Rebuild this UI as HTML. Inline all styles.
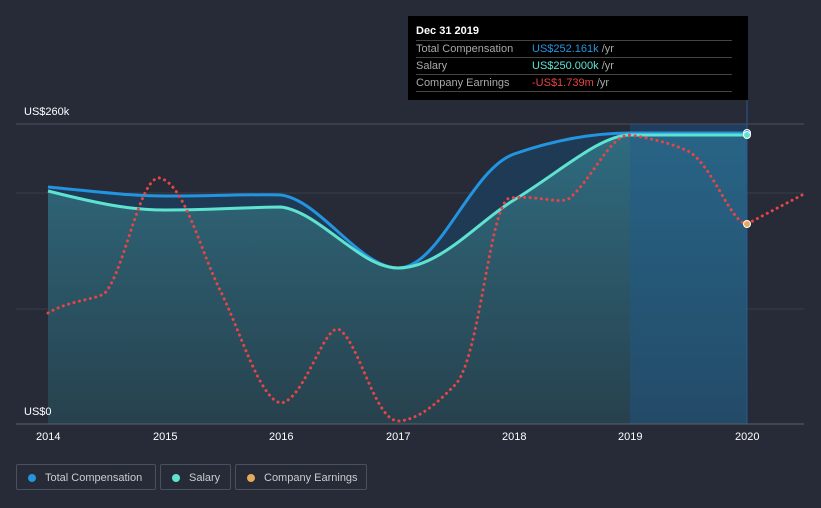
<!DOCTYPE html>
<html><head><style>
body{margin:0;width:821px;height:508px;background:#262b37;font-family:"Liberation Sans",sans-serif;overflow:hidden;position:relative}
.tt{position:absolute;left:408px;top:16px;width:340px;height:84px;background:#000;color:#fff;font-size:11px}
.tt .h{position:absolute;left:8px;top:9px;font-weight:bold;font-size:11px}
.row{position:absolute;left:8px;width:316px;border-top:1px solid #444;height:16px;line-height:16px;color:#aaa}
.row span{position:absolute;left:116px}
.lg{position:absolute;top:464px;height:26px;border:1px solid #4a505c;border-radius:2px;color:#ccc;font-size:11px;line-height:26px;box-sizing:border-box}
.lg i{position:absolute;left:11px;top:9px;width:8px;height:8px;border-radius:50%}
.ax{position:absolute;color:#fff;font-size:11px}
</style></head><body>
<svg width="821" height="508" style="position:absolute;left:0;top:0">
<defs>
<linearGradient id="g1" x1="0" y1="0" x2="0" y2="1"><stop offset="0" stop-color="#2f6b7f"/><stop offset="1" stop-color="#27414d"/></linearGradient>
</defs>
<line x1="16" y1="124" x2="804" y2="124" stroke="#4a505c"/>
<line x1="16" y1="193" x2="804" y2="193" stroke="#363c48"/>
<line x1="16" y1="309" x2="804" y2="309" stroke="#363c48"/>
<path d="M48,187 C100,192 130,196 165,196 C220,196 250,194 281,195 C320,200 360,268 398,268 C440,268 470,170 514,154 C560,138 600,133 630,133 L747,133 L747,424 L48,424Z" fill="#1f3a55"/>
<path d="M48,191 C100,204 130,210 165,210 C220,210 250,207 281,207 C320,212 360,268 398,268 C440,268 480,220 514,200 C560,172 600,135 630,135 L747,135 L747,424 L48,424Z" fill="url(#g1)"/>
<rect x="630" y="124" width="117" height="300" fill="#1f5a90" opacity="0.4"/>
<line x1="747" y1="100" x2="747" y2="424" stroke="#2a5a90"/>
<path d="M48,187 C100,192 130,196 165,196 C220,196 250,194 281,195 C320,200 360,268 398,268 C440,268 470,170 514,154 C560,138 600,133 630,133 L747,133" fill="none" stroke="#2394df" stroke-width="3"/>
<path d="M48,191 C100,204 130,210 165,210 C220,210 250,207 281,207 C320,212 360,268 398,268 C440,268 480,220 514,200 C560,172 600,135 630,135 L747,135" fill="none" stroke="#5fe3d1" stroke-width="3"/>
<path d="M48,313 C70,300 95,300 105,293 C125,270 140,175 160,178 C185,185 200,250 220,290 C240,330 260,400 281,403 C305,400 325,320 340,330 C360,345 375,420 398,421 C420,420 440,400 455,385 C480,360 490,200 510,198 C540,195 560,205 570,198 C595,175 610,135 630,135 C660,140 675,145 690,152 C715,170 730,222 747,224 L804,194" fill="none" stroke="#e64545" stroke-width="3" stroke-dasharray="0.1 5.5" stroke-linecap="round"/>
<circle cx="747" cy="133" r="3.5" fill="#2394df" stroke="#fff" stroke-width="1"/>
<circle cx="747" cy="135" r="3.5" fill="#5fe3d1" stroke="#fff" stroke-width="1"/>
<circle cx="747" cy="224" r="3.5" fill="#e6a85a" stroke="#fff" stroke-width="1"/>
<line x1="16" y1="424" x2="804" y2="424" stroke="#5a606c"/>
</svg>
<div class="ax" style="left:24px;top:106px">US$260k</div>
<div class="ax" style="left:24px;top:406px">US$0</div>
<div class="ax" style="left:36px;top:431px">2014</div>
<div class="ax" style="left:153px;top:431px">2015</div>
<div class="ax" style="left:269px;top:431px">2016</div>
<div class="ax" style="left:386px;top:431px">2017</div>
<div class="ax" style="left:502px;top:431px">2018</div>
<div class="ax" style="left:618px;top:431px">2019</div>
<div class="ax" style="left:735px;top:431px">2020</div>
<div class="tt"><div class="h">Dec 31 2019</div>
<div class="row" style="top:24px">Total Compensation<span><b style="color:#2394df;font-weight:normal">US$252.161k</b> /yr</span></div>
<div class="row" style="top:41px">Salary<span><b style="color:#5fe3d1;font-weight:normal">US$250.000k</b> /yr</span></div>
<div class="row" style="top:58px;border-bottom:1px solid #444">Company Earnings<span><b style="color:#e64545;font-weight:normal">-US$1.739m</b> /yr</span></div>
</div>
<div class="lg" style="left:16px;width:140px"><i style="background:#2394df"></i><span style="position:absolute;left:28px">Total Compensation</span></div>
<div class="lg" style="left:160px;width:71px"><i style="background:#5fe3d1"></i><span style="position:absolute;left:28px">Salary</span></div>
<div class="lg" style="left:235px;width:132px"><i style="background:#e6a85a"></i><span style="position:absolute;left:28px">Company Earnings</span></div>
</body></html>
